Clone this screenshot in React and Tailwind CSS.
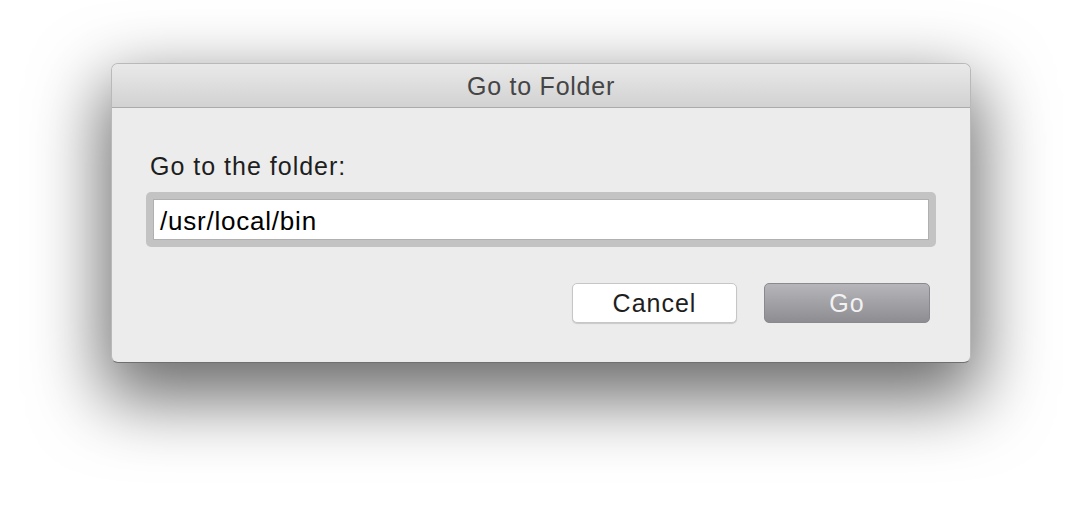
import React from 'react';

export default function App() {
  return (
    <div className="w-[1082px] h-[522px] bg-white overflow-hidden pt-[63px] pl-[111px] font-['Liberation_Sans',Arial,sans-serif]">
      <div className="w-[860px] h-[300px] rounded-[7px] bg-[#ececec] border border-[#b9b9b9] border-b-[#6f6f6f] shadow-[0_28px_70px_8px_rgba(0,0,0,0.58)] overflow-hidden flex flex-col">
        {/* Title bar */}
        <div className="h-[44px] shrink-0 bg-gradient-to-b from-[#e9e9e9] to-[#d2d2d2] border-b border-[#ababab] flex items-center justify-center">
          <span className="text-[25px] tracking-[0.03em] text-[#454545] leading-none pt-[2px]">Go to Folder</span>
        </div>

        {/* Body */}
        <div className="flex flex-col px-[34px] pt-[46px]">
          <label className="ml-[4px] text-[25px] tracking-[0.04em] text-[#1e1e1e] leading-none">Go to the folder:</label>
          <div className="mt-[13px] rounded-[5px] bg-[#c3c3c3] p-[7px]">
            <div className="h-[41px] bg-white border border-[#b0b0b0] flex items-center px-[6px]">
              <span className="text-[26px] tracking-[0.03em] text-black leading-none pt-[3px]">/usr/local/bin</span>
            </div>
          </div>
          <div className="mt-[36px] flex justify-end gap-[27px] pr-[6px]">
            <button className="w-[165px] h-[40px] rounded-[5px] bg-white border border-[#c6c6c6] shadow-[0_1px_1px_rgba(0,0,0,0.15)] text-[25px] tracking-[0.04em] leading-none text-[#1e1e1e]">
              Cancel
            </button>
            <button className="w-[166px] h-[40px] rounded-[5px] bg-gradient-to-b from-[#b6b5ba] to-[#8e8d92] border border-[#8a898e] text-[25px] tracking-[0.04em] leading-none text-[#f2f2f2]">
              Go
            </button>
          </div>
        </div>
      </div>
    </div>
  );
}
